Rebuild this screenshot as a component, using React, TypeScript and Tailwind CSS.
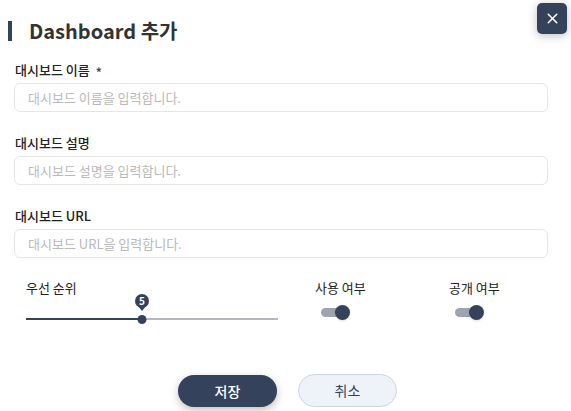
import React from 'react';
import { X } from 'lucide-react';

const FONT = { fontFamily: '"Noto Sans CJK KR", "Noto Sans", sans-serif' };

const fields = [
  { label: '대시보드 이름', placeholder: '대시보드 이름을 입력합니다.', required: true },
  { label: '대시보드 설명', placeholder: '대시보드 설명을 입력합니다.', required: false },
  { label: '대시보드 URL', placeholder: '대시보드 URL을 입력합니다.', required: false },
];

const Toggle: React.FC = () => (
  <div className="relative ml-[6px] flex h-[15px] w-[29px] items-center">
    <div className="h-[9px] w-[24px] rounded-full bg-[#9ea3b0]" />
    <div className="absolute right-0 top-0 h-[15px] w-[15px] rounded-full bg-[#34425c] shadow-sm" />
  </div>
);

const App: React.FC = () => {
  const priority = 5;
  const pct = 46;

  return (
    <div className="relative h-[411px] w-[571px] overflow-hidden bg-white" style={FONT}>
      {/* Close */}
      <button className="absolute right-[4px] top-[3px] flex h-[31px] w-[30px] items-center justify-center rounded-[5px] bg-[#34425c] text-white shadow-[0_2px_10px_rgba(0,0,0,0.25)]">
        <X size={17} strokeWidth={2.2} />
      </button>

      {/* Header */}
      <div className="ml-[8px] mt-[21px] flex h-[20px] items-center">
        <div className="h-[20px] w-[4px] bg-[#34425c]" />
        <h2 className="ml-[17px] text-[20px] font-bold leading-none text-[#333333]">Dashboard 추가</h2>
      </div>

      {/* Fields */}
      <div className="mt-[20px] flex flex-col gap-[22px] pl-[14px] pr-[23px]">
        {fields.map((f) => (
          <div key={f.label}>
            <div className="mb-[4px] flex h-[18px] items-center pl-[1px] text-[13px] font-medium leading-[18px] text-[#222222]">
              {f.label}
              {f.required && <span className="ml-[6px] mt-[3px] text-[12px] font-bold text-[#3b4b6b]">*</span>}
            </div>
            <input
              className="h-[29px] w-full rounded-[6px] border border-[#e6e6e6] px-[13px] text-[13px] text-[#333] outline-none placeholder:text-[#b9b9b9]"
              placeholder={f.placeholder}
            />
          </div>
        ))}
      </div>

      {/* Priority / toggles */}
      <div className="mt-[21px] flex pl-[26px]">
        <div className="w-[252px]">
          <div className="h-[18px] text-[13px] leading-[18px] text-[#222222]">우선 순위</div>
          <div className="relative mt-[12px] h-[20px]">
            <div className="absolute left-0 right-0 top-[9px] flex h-[2px]">
              <div className="h-full bg-[#34425c]" style={{ width: `${pct}%` }} />
              <div className="h-full flex-1 bg-[#b3b7c3]" />
            </div>
            <div
              className="absolute top-[6px] h-[9px] w-[9px] -translate-x-1/2 rounded-full bg-[#34425c]"
              style={{ left: `${pct}%` }}
            />
            <div
              className="absolute -top-[15px] flex -translate-x-1/2 flex-col items-center"
              style={{ left: `${pct}%` }}
            >
              <div className="flex h-[14px] w-[14px] items-center justify-center rounded-full bg-[#34425c] text-[10px] font-bold leading-none text-white">
                {priority}
              </div>
              <div className="-mt-[2px] h-0 w-0 border-x-[4px] border-t-[5px] border-x-transparent border-t-[#34425c]" />
            </div>
          </div>
        </div>

        <div className="ml-[37px] w-[134px]">
          <div className="h-[18px] text-[13px] leading-[18px] text-[#222222]">사용 여부</div>
          <div className="mt-[8px]">
            <Toggle />
          </div>
        </div>

        <div>
          <div className="h-[18px] text-[13px] leading-[18px] text-[#222222]">공개 여부</div>
          <div className="mt-[8px]">
            <Toggle />
          </div>
        </div>
      </div>

      {/* Buttons */}
      <div className="mt-[46px] flex justify-center gap-[21px] pl-[4px]">
        <button className="h-[32px] w-[99px] rounded-full bg-[#34425c] text-[14px] font-medium text-white shadow-[0_3px_8px_rgba(0,0,0,0.25)]">
          저장
        </button>
        <button className="h-[33px] w-[99px] -translate-y-[1px] rounded-full border border-[#cdd5e0] bg-[#eef3f9] text-[14px] text-[#34425c]">
          취소
        </button>
      </div>
    </div>
  );
};

export default App;
